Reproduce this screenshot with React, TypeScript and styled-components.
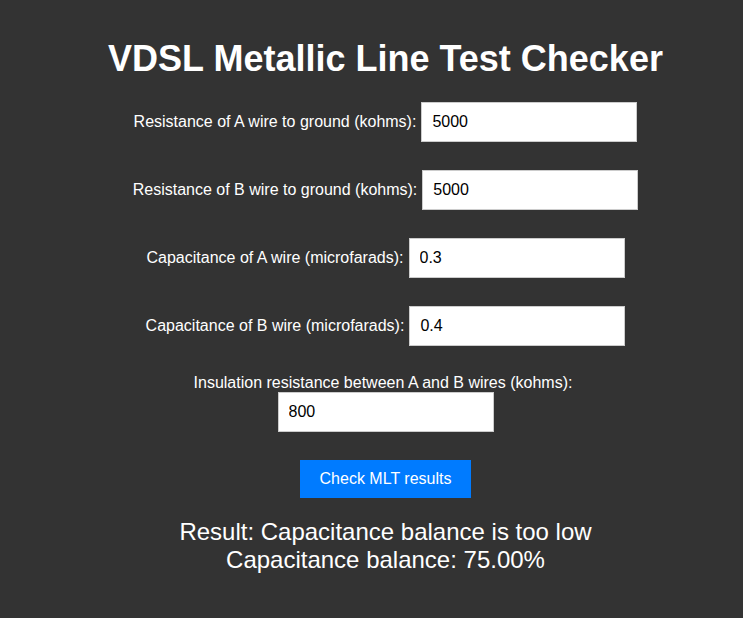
import React from "react";
import styled, { createGlobalStyle } from "styled-components";

const GlobalStyle = createGlobalStyle`
  html, body {
    margin: 0;
    padding: 0;
    background: #333333;
  }
  body {
    font-family: "Liberation Sans", Arial, sans-serif;
  }
`;

const Page = styled.div`
  min-height: 100vh;
  box-sizing: border-box;
  background: #333333;
  color: #ffffff;
  padding: 38px 0 40px 28px;
  display: flex;
  flex-direction: column;
  align-items: center;
  font-family: "Liberation Sans", Arial, sans-serif;
`;

const Title = styled.h1`
  margin: 0 0 22px;
  font-size: 36px;
  font-weight: bold;
  color: #ffffff;
  text-align: center;
`;

const Form = styled.form`
  display: flex;
  flex-direction: column;
  align-items: center;
  gap: 28px;
`;

const Field = styled.div`
  display: flex;
  flex-wrap: wrap;
  justify-content: center;
  align-items: center;
  max-width: 520px;
`;

const Label = styled.label`
  font-size: 16px;
  color: #ffffff;
  margin-right: 5px;
  line-height: 18px;
`;

const Input = styled.input`
  box-sizing: border-box;
  width: 216px;
  height: 40px;
  padding: 0 10px;
  border: 1px solid #cccccc;
  background: #ffffff;
  color: #000000;
  font-size: 16px;
  font-family: "Liberation Sans", Arial, sans-serif;
  outline: none;
`;

const Button = styled.button`
  border: none;
  background: #007bff;
  color: #ffffff;
  font-size: 16px;
  font-family: "Liberation Sans", Arial, sans-serif;
  padding: 10px 20px;
  height: 38px;
  cursor: pointer;
`;

const Result = styled.div`
  margin-top: 20px;
  font-size: 24px;
  line-height: 28px;
  text-align: center;
  color: #ffffff;
`;

const fields = [
  { id: "ra", label: "Resistance of A wire to ground (kohms):", value: "5000" },
  { id: "rb", label: "Resistance of B wire to ground (kohms):", value: "5000" },
  { id: "ca", label: "Capacitance of A wire (microfarads):", value: "0.3" },
  { id: "cb", label: "Capacitance of B wire (microfarads):", value: "0.4" },
  { id: "ins", label: "Insulation resistance between A and B wires (kohms):", value: "800" },
];

export default function App() {
  return (
    <>
      <GlobalStyle />
      <Page>
        <Title>VDSL Metallic Line Test Checker</Title>
        <Form onSubmit={(e) => e.preventDefault()}>
          {fields.map((f) => (
            <Field key={f.id}>
              <Label htmlFor={f.id}>{f.label}</Label>
              <Input id={f.id} type="text" defaultValue={f.value} />
            </Field>
          ))}
          <Button type="submit">Check MLT results</Button>
        </Form>
        <Result>
          <div>Result: Capacitance balance is too low</div>
          <div>Capacitance balance: 75.00%</div>
        </Result>
      </Page>
    </>
  );
}
